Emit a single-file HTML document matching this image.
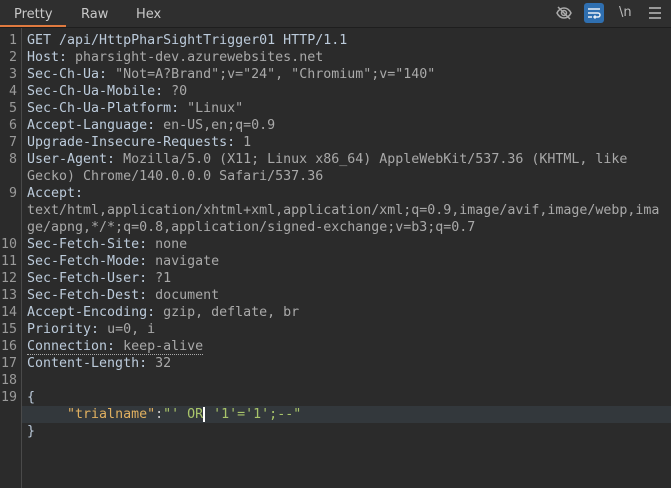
<!DOCTYPE html>
<html><head><style>
body{margin:0;width:671px;height:488px;background:#2b2b2b;overflow:hidden;font-family:"DejaVu Sans","Liberation Sans",sans-serif}
.tabs{position:absolute;top:0;left:0;width:671px;height:27px;background:#2f2f2f;border-bottom:1px solid #1e1e1e}
.tab{position:absolute;top:7px;font-size:13px;color:#c8c8c8}
.ul{position:absolute;left:0;top:25px;width:66px;height:2px;background:#e07a3f}
.gut{position:absolute;left:21px;top:28px;width:1px;height:460px;background:#4a4a4a}
.code{position:absolute;left:0;top:32px;width:671px;font-family:"DejaVu Sans Mono","Liberation Mono",monospace;font-size:13.3px;line-height:17px}
.r{height:17px;position:relative}
.n{position:absolute;left:0;width:17px;text-align:right;color:#9a9a9a}
.t{position:absolute;left:27px;color:#a9a9a9;white-space:pre}
.k{color:#bccbdb}
.hl{position:absolute;left:22px;width:649px;height:17px;background:#33383c}
</style></head><body>
<div class="tabs">
<span class="tab" style="left:14px">Pretty</span><span class="tab" style="left:81px">Raw</span><span class="tab" style="left:136px">Hex</span>
<div class="ul"></div>
<svg style="position:absolute;left:555px;top:4px" width="18" height="18" viewBox="0 0 18 18" fill="none" stroke="#aaa" stroke-width="1.5"><path d="M2 9c2-4 5-5 7-5s5 1 7 5c-2 4-5 5-7 5s-5-1-7-5z"/><circle cx="9" cy="9" r="2.5"/><path d="M3 3l12 12"/></svg>
<div style="position:absolute;left:584px;top:3px;width:20px;height:20px;background:#2f6fb0;border-radius:3px"></div>
<svg style="position:absolute;left:586px;top:5px" width="16" height="16" viewBox="0 0 16 16" fill="none" stroke="#e8eef5" stroke-width="1.5"><path d="M2 4h12M2 8h10a2 2 0 0 1 0 4H8M9.5 10.5L8 12l1.5 1.5M2 12h4"/></svg>
<span class="tab" style="left:619px;top:5px;color:#bbb">\n</span>
<svg style="position:absolute;left:648px;top:6px" width="14" height="14" viewBox="0 0 14 14" stroke="#999" stroke-width="2"><path d="M1 2h12M1 7h12M1 12h12"/></svg>
</div>
<div class="gut"></div>
<div class="code"><div class="r"><span class="n">1</span><span class="t k">GET /api/HttpPharSightTrigger01 HTTP/1.1</span></div><div class="r"><span class="n">2</span><span class="t"><span class="k">Host:</span> pharsight-dev.azurewebsites.net</span></div><div class="r"><span class="n">3</span><span class="t"><span class="k">Sec-Ch-Ua:</span> "Not=A?Brand";v="24", "Chromium";v="140"</span></div><div class="r"><span class="n">4</span><span class="t"><span class="k">Sec-Ch-Ua-Mobile:</span> ?0</span></div><div class="r"><span class="n">5</span><span class="t"><span class="k">Sec-Ch-Ua-Platform:</span> "Linux"</span></div><div class="r"><span class="n">6</span><span class="t"><span class="k">Accept-Language:</span> en-US,en;q=0.9</span></div><div class="r"><span class="n">7</span><span class="t"><span class="k">Upgrade-Insecure-Requests:</span> 1</span></div><div class="r"><span class="n">8</span><span class="t"><span class="k">User-Agent:</span> Mozilla/5.0 (X11; Linux x86_64) AppleWebKit/537.36 (KHTML, like</span></div><div class="r"><span class="t">Gecko) Chrome/140.0.0.0 Safari/537.36</span></div><div class="r"><span class="n">9</span><span class="t k">Accept:</span></div><div class="r"><span class="t">text/html,application/xhtml+xml,application/xml;q=0.9,image/avif,image/webp,ima</span></div><div class="r"><span class="t">ge/apng,*/*;q=0.8,application/signed-exchange;v=b3;q=0.7</span></div><div class="r"><span class="n">10</span><span class="t"><span class="k">Sec-Fetch-Site:</span> none</span></div><div class="r"><span class="n">11</span><span class="t"><span class="k">Sec-Fetch-Mode:</span> navigate</span></div><div class="r"><span class="n">12</span><span class="t"><span class="k">Sec-Fetch-User:</span> ?1</span></div><div class="r"><span class="n">13</span><span class="t"><span class="k">Sec-Fetch-Dest:</span> document</span></div><div class="r"><span class="n">14</span><span class="t"><span class="k">Accept-Encoding:</span> gzip, deflate, br</span></div><div class="r"><span class="n">15</span><span class="t"><span class="k">Priority:</span> u=0, i</span></div><div class="r"><span class="n">16</span><span class="t" style="border-bottom:1px dotted #aaa;height:16px"><span class="k">Connection:</span> keep-alive</span></div><div class="r"><span class="n">17</span><span class="t"><span class="k">Content-Length:</span> 32</span></div><div class="r"><span class="n">18</span></div><div class="r"><span class="n">19</span><span class="t k">{</span></div><div class="r"><div class="hl"></div><span class="t">     <span style="color:#e0b060">"trialname"</span><span style="color:#ccc">:</span><span style="color:#a8c46a">"' OR<span style="border-left:2px solid #fff"></span> '1'='1';--"</span></span></div><div class="r"><span class="t k">}</span></div></div>
</body></html>
